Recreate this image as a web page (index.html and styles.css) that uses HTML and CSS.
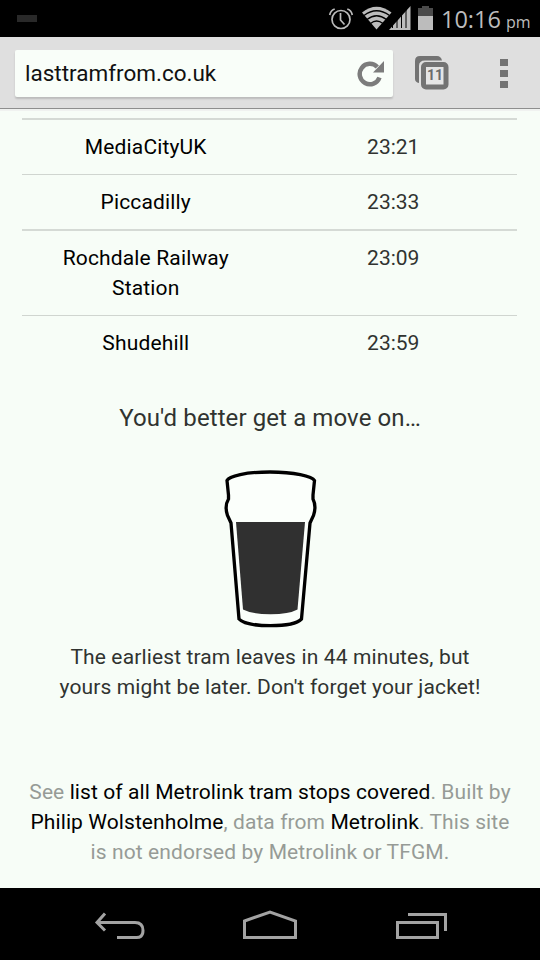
FILE: index.html
```html
<!DOCTYPE html>
<html lang="en">
<head>
    <meta charset="UTF-8">
    <meta name="viewport" content="width=device-width, initial-scale=1.0">
    <title>Last Tram From</title>
    <link rel="stylesheet" href="styles.css">
</head>
<body>
    <div class="status-bar">
        <span class="notification"></span>
        <svg class="status-icons" width="116" height="37" viewBox="0 0 116 37">
            <g fill="none" stroke="#bcbcbc" stroke-width="1.7">
                <circle cx="13" cy="19.5" r="9"/>
                <path d="M12.500 13v7l4 4.500M1.700 15c.5-3 2.300-5 5-6M24.300 15c-.5-3-2.300-5-5-6"/>
            </g>
            <path d="M48.500 29.500L34 12.500Q48.500 1 63.500 12.500z" fill="#bcbcbc"/>
            <path d="M36 15.500q12.500-9.500 25.500 0M39 19.500q9.500-7.500 19.500 0M42.500 23.500q6-5 12.500 0" fill="none" stroke="#000" stroke-width="1.3"/>
            <path d="M61 30L82.500 6v24z" fill="#bcbcbc"/>
            <path d="M64.500 8v20M69 8v20M73.500 8v20M78 8v20" stroke="#000" stroke-width="1"/>
            <path d="M90 8h4V6h7v2h4v8H90z" fill="#4b4b4b"/>
            <path d="M90 16h15v14H90z" fill="#bcbcbc"/>
        </svg>
        <span class="clock">10:16</span>
        <span class="meridiem">pm</span>
    </div>

    <div class="toolbar">
        <div class="address">
            <span class="url">lasttramfrom.co.uk</span>
            <svg width="28" height="28" viewBox="0 0 28 28">
                <path d="M22.500 18.500A10.200 10.200 0 1 1 20.300 8" fill="none" stroke="#7c7c7c" stroke-width="4.500"/>
                <path d="M27 2v11.500H16z" fill="#7c7c7c"/>
            </svg>
        </div>
        <div class="tabs">
            <svg width="34" height="34" viewBox="0 0 34 34">
                <path d="M4 27Q0 26 0 23V5Q0 0 5 0H22Q26 0 27 4.500H10Q4 4.500 4 10z" fill="#737373"/>
                <rect x="8.500" y="8.500" width="22.500" height="22.500" rx="2.500" fill="#e5e5e5" stroke="#737373" stroke-width="5"/>
            </svg>
            <span class="tab-count">11</span>
        </div>
        <div class="menu">
            <span></span>
            <span></span>
            <span></span>
        </div>
    </div>

    <div class="page">
        <div class="times">
            <div class="row thick">
                <a>MediaCityUK</a>
                <span>23:21</span>
            </div>
            <div class="row">
                <a>Piccadilly</a>
                <span>23:33</span>
            </div>
            <div class="row thick">
                <a>Rochdale Railway<br>Station</a>
                <span>23:09</span>
            </div>
            <div class="row">
                <a>Shudehill</a>
                <span>23:59</span>
            </div>
        </div>

        <h2>You'd better get a move on…</h2>

        <svg class="pint" width="96" height="160" viewBox="0 0 96 160">
            <path d="M5 12.500C7 8 24 4 48 4s42 4 44.500 8.500L91 27v4C93.500 36 93 43 91.500 47.500L88 55 79.500 151C75 155.500 62 157.700 48.500 157.700S21 155.500 17 151L9 55 5.500 47.500C4 43 3.500 36 6.500 31v-4z" fill="#fbfffb" stroke="#000" stroke-width="3.300"/>
            <path d="M14 54h69L75.500 141.500Q67 146.200 48.500 146.200T21 141.500z" fill="#303030"/>
        </svg>

        <p class="message">The earliest tram leaves in 44 minutes, but<br>yours might be later. Don't forget your jacket!</p>

        <p class="footer">See <a>list of all Metrolink tram stops covered</a>. Built by<br><a>Philip Wolstenholme</a>, data from <a>Metrolink</a>. This site<br>is not endorsed by Metrolink or TFGM.</p>
    </div>

    <div class="nav-bar">
        <svg width="540" height="72" viewBox="0 0 540 72" fill="none" stroke="#a3a3a3" stroke-width="3">
            <path d="M105 25.500L97 34.500l8 8M97 34.500h38q8 0 8 8t-8 7H117"/>
            <path d="M244.500 33L270 24l25.500 9v16.500h-51z"/>
            <path d="M397.500 34.500h40v15h-40zM408 26.500h37.500V43"/>
        </svg>
    </div>
</body>
</html>
```

FILE: styles.css
```css
* {
    box-sizing: border-box;
}
body {
    margin: 0;
    height: 960px;
    display: flex;
    flex-direction: column;
    overflow: hidden;
    font-family: Roboto, sans-serif;
    background-color: #f7fdf7;
    color: #303330;
}
svg {
    display: block;
    flex: none;
}
.status-bar {
    height: 37px;
    display: flex;
    align-items: baseline;
    padding-left: 17px;
    background-color: #000;
    color: #bcbcbc;
    font-family: "Open Sans", sans-serif;
}
.notification {
    align-self: center;
    width: 20px;
    height: 7px;
    background-color: #292929;
}
.status-icons {
    align-self: center;
    margin-left: 291px;
}
.clock {
    width: 60px;
    margin-left: -3px;
    font-size: 23.5px;
    line-height: 38px;
}
.meridiem {
    margin-left: 5px;
    font-size: 16px;
}
.toolbar {
    height: 72px;
    display: flex;
    align-items: center;
    padding: 1px 0 0 15px;
    background-color: #dfdfdf;
    border-bottom: 1px solid #8e8e8e;
}
.address {
    width: 378px;
    height: 47px;
    display: flex;
    align-items: center;
    justify-content: space-between;
    padding: 0 8px 0 10px;
    border-radius: 2px;
    background-color: #f9fef9;
    box-shadow: 0 2px 2px rgba(0, 0, 0, 0.16);
}
.url {
    font-size: 22.5px;
    color: #111;
}
.tabs {
    position: relative;
    margin-left: 22px;
}
.tab-count {
    position: absolute;
    left: 7px;
    top: 6px;
    width: 26px;
    text-align: center;
    font-size: 14px;
    line-height: 27px;
    font-weight: 700;
    color: #6b6b6b;
}
.menu {
    display: flex;
    flex-direction: column;
    gap: 4px;
    margin-left: 51px;
}
.menu span {
    width: 8px;
    height: 7px;
    background-color: #737373;
}
.page {
    flex: 1;
    padding: 7px 22px 0;
    border-top: 2px solid #f0f2f0;
    font-size: 21px;
    line-height: 30px;
    text-align: center;
}
a {
    color: #000;
}
.times {
    width: 495px;
}
.row {
    display: grid;
    grid-template-columns: 1fr 1fr;
    padding: 12px 0;
    border-top: 1px solid #d0d5d0;
}
.row a {
    letter-spacing: 0.15px;
}
.thick {
    border-top: 2px solid #d5dad5;
}
h2 {
    margin: 33px 0 0;
    font-size: 24px;
    line-height: 30px;
    font-weight: 400;
    letter-spacing: 0.1px;
}
.pint {
    margin: 35px auto 0;
}
.message {
    margin: 14px 0 0;
    letter-spacing: 0.13px;
}
.footer {
    margin: 75px -10px 0;
    letter-spacing: 0.09px;
    color: #969b96;
}
.nav-bar {
    height: 72px;
    background-color: #000;
}
```
